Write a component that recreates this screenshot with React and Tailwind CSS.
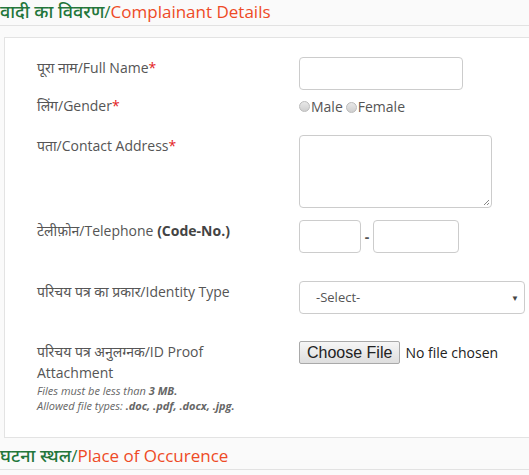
import React from 'react';

const Req = () => <span className="text-[#e32222]">*</span>;

const Label = ({ children, className = '' }) => (
  <div className={`w-[294px] shrink-0 pl-[32px] text-[14px] leading-[20px] text-[#555] ${className}`}>{children}</div>
);

const Radio = () => (
  <span className="inline-block w-[11px] h-[11px] rounded-full border border-[#bbb] bg-gradient-to-b from-[#e8e8e8] to-[#cfcfcf] align-[-1px]" />
);

const SectionTitle = ({ hi, en }) => (
  <div className="border-b border-[#e2e2e2] pb-[2px] text-[17px] leading-[22px]">
    <span className="text-[#23763a] text-[18px] font-medium">{hi}</span>
    <span className="text-[#23763a]">/</span>
    <span className="text-[#ee4a26]">{en}</span>
  </div>
);

export default function App() {
  return (
    <div
      className="w-[529px] h-[475px] overflow-hidden bg-[#fafafa]"
      style={{ fontFamily: '"Open Sans", "Noto Sans", "Noto Sans Devanagari", sans-serif' }}
    >
      <div>
        <SectionTitle hi="वादी का विवरण" en="Complainant Details" />
      </div>

      <div className="ml-[4px] mt-[11px] w-[540px] border border-[#e3e3e3] bg-white pt-[19px] pb-[24px]">
        {/* full name */}
        <div className="flex">
          <Label className="pt-[1px]">पूरा नाम/Full Name<Req /></Label>
          <input className="w-[164px] h-[33px] rounded-[4px] border border-[#ccc] bg-white" />
        </div>

        {/* gender */}
        <div className="flex mt-[6px] h-[20px] items-center">
          <Label>लिंग/Gender<Req /></Label>
          <div className="flex items-center text-[14px] text-[#555] mt-[1px]">
            <Radio />
            <span className="ml-[1px]">Male</span>
            <span className="ml-[3px]"><Radio /></span>
            <span className="ml-[1px]">Female</span>
          </div>
        </div>

        {/* address */}
        <div className="flex mt-[19px]">
          <Label className="pt-[1px]">पता/Contact Address<Req /></Label>
          <div className="relative w-[193px] h-[73px] rounded-[4px] border border-[#ccc] bg-white">
            <svg className="absolute right-[1px] bottom-[1px]" width="8" height="8" viewBox="0 0 8 8">
              <path d="M7 2 L2 7 M7 5 L5 7" stroke="#888" strokeWidth="1" />
            </svg>
          </div>
        </div>

        {/* telephone */}
        <div className="flex mt-[12px]">
          <Label className="pt-[1px]">टेलीफ़ोन/Telephone <span className="font-bold text-[#444]">(Code-No.)</span></Label>
          <div className="flex items-center">
            <input className="w-[62px] h-[33px] rounded-[4px] border border-[#ccc] bg-white" />
            <span className="w-[12px] text-center text-[14px] font-bold text-[#555]">-</span>
            <input className="w-[86px] h-[33px] rounded-[4px] border border-[#ccc] bg-white" />
          </div>
        </div>

        {/* identity type */}
        <div className="flex mt-[28px]">
          <Label className="pt-[1px]">परिचय पत्र का प्रकार/Identity Type</Label>
          <div className="flex items-center justify-between w-[226px] h-[33px] rounded-[4px] border border-[#ccc] bg-white pl-[16px] pr-[5px] text-[13px] text-[#555]">
            <span>-Select-</span>
            <span className="text-[8px] text-[#444]">▼</span>
          </div>
        </div>

        {/* id proof */}
        <div className="flex mt-[27px]">
          <div className="w-[294px] shrink-0 pl-[32px] text-[#555]">
            <div className="text-[14px] leading-[21px]">परिचय पत्र अनुलग्नक/ID Proof</div>
            <div className="text-[14px] leading-[21px]">Attachment</div>
            <div className="italic text-[11px] leading-[15px] text-[#666]">
              Files must be less than <span className="font-bold">3 MB.</span>
            </div>
            <div className="italic text-[11px] leading-[15px] text-[#666]">
              Allowed file types: <span className="font-bold">.doc, .pdf, .docx, .jpg.</span>
            </div>
          </div>
          <div className="flex items-start">
            <button
              className="h-[23px] px-[7px] rounded-[2px] border border-[#a9a9a9] bg-gradient-to-b from-[#f6f6f6] to-[#dedede] text-[16px] leading-[20px] text-[#222]"
              style={{ fontFamily: '"Liberation Sans", Arial, sans-serif' }}
            >
              Choose File
            </button>
            <span className="ml-[5px] text-[14px] leading-[23px] text-[#222]">No file chosen</span>
          </div>
        </div>
      </div>

      <div className="mt-[6px]">
        <SectionTitle hi="घटना स्थल" en="Place of Occurence" />
      </div>
    </div>
  );
}
